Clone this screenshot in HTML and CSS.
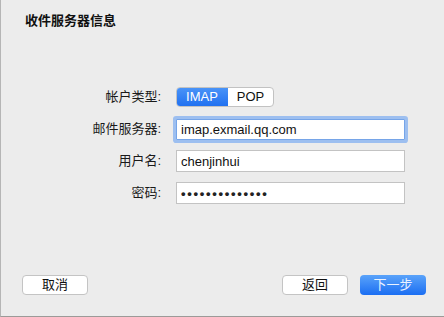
FILE: index.html
```html
<!DOCTYPE html>
<html lang="zh-CN">
<head>
<meta charset="utf-8">
<title>收件服务器信息</title>
<link rel="stylesheet" href="styles.css">
</head>
<body>
<div class="window">
  <div class="title">收件服务器信息</div>
  <div class="form">
    <div class="label">帐户类型:</div>
    <div class="segmented">
      <span class="seg seg-on">IMAP</span>
      <span class="seg">POP</span>
    </div>
    <div class="label">邮件服务器:</div>
    <input class="field focused" type="text" value="imap.exmail.qq.com">
    <div class="label">用户名:</div>
    <input class="field" type="text" value="chenjinhui">
    <div class="label">密码:</div>
    <input class="field pw" type="text" value="••••••••••••••">
  </div>
  <div class="footer">
    <button class="btn">取消</button>
    <div class="spacer"></div>
    <button class="btn">返回</button>
    <button class="btn primary">下一步</button>
  </div>
</div>
</body>
</html>
```
FILE: styles.css
```css
html, body {
  margin: 0;
  padding: 0;
  background: #ececec;
}
body {
  font-family: "Liberation Sans", "Noto Sans CJK SC", sans-serif;
  font-size: 13px;
  color: #111;
}
.window {
  width: 444px;
  height: 317px;
  box-sizing: border-box;
  border-left: 1px solid #b5b5b5;
  border-bottom: 1px solid #9c9a98;
  background: #ececec;
  display: flex;
  flex-direction: column;
}
.title {
  margin: 13px 0 0 24px;
  font-weight: bold;
  font-size: 13px;
  line-height: 16px;
  color: #111;
}
.form {
  display: grid;
  grid-template-columns: 160px 230px;
  grid-auto-rows: 22px;
  column-gap: 15px;
  row-gap: 10px;
  align-items: center;
  margin-top: 57px;
}
.label {
  text-align: right;
  line-height: 16px;
  color: #1a1a1a;
}
.segmented {
  display: flex;
  width: 98px;
  height: 20px;
  box-sizing: border-box;
  border: 1px solid #c2c2c2;
  border-radius: 4px;
  overflow: hidden;
  background: #fff;
}
.seg {
  display: flex;
  align-items: center;
  justify-content: center;
  width: 45px;
  line-height: 16px;
  color: #111;
}
.seg-on {
  width: 52px;
  margin: -1px 0 -1px -1px;
  color: #fff;
  background: linear-gradient(#4b95f8, #1f6ff0);
}
.field {
  box-sizing: border-box;
  width: 229px;
  height: 22px;
  margin: 0;
  padding: 0 0 0 4px;
  border: 1px solid #c3c3c3;
  border-radius: 0;
  background: #fff;
  font-family: "Liberation Sans", "Noto Sans CJK SC", sans-serif;
  font-size: 13px;
  color: #111;
  outline: none;
}
.focused {
  height: 21px;
  border-color: #76a5e8;
  box-shadow: 0 0 0 3px #9dbff0;
  border-radius: 1px;
}
.pw {
  letter-spacing: 1.7px;
  font-size: 13px;
  font-weight: bold;
  color: #222;
}
.footer {
  margin-top: auto;
  display: flex;
  align-items: center;
  padding: 0 18px 21px 21px;
  gap: 12px;
}
.spacer {
  flex: 1;
}
.btn {
  width: 66px;
  height: 20px;
  margin: 0;
  padding: 0;
  box-sizing: border-box;
  border: 1px solid #c4c4c4;
  border-radius: 4px;
  background: #fff;
  font-family: "Liberation Sans", "Noto Sans CJK SC", sans-serif;
  font-size: 13px;
  line-height: 16px;
  color: #111;
}
.primary {
  border: none;
  background: linear-gradient(#5aa3fa, #1b6ef2);
  color: #eaf2ff;
}
```
